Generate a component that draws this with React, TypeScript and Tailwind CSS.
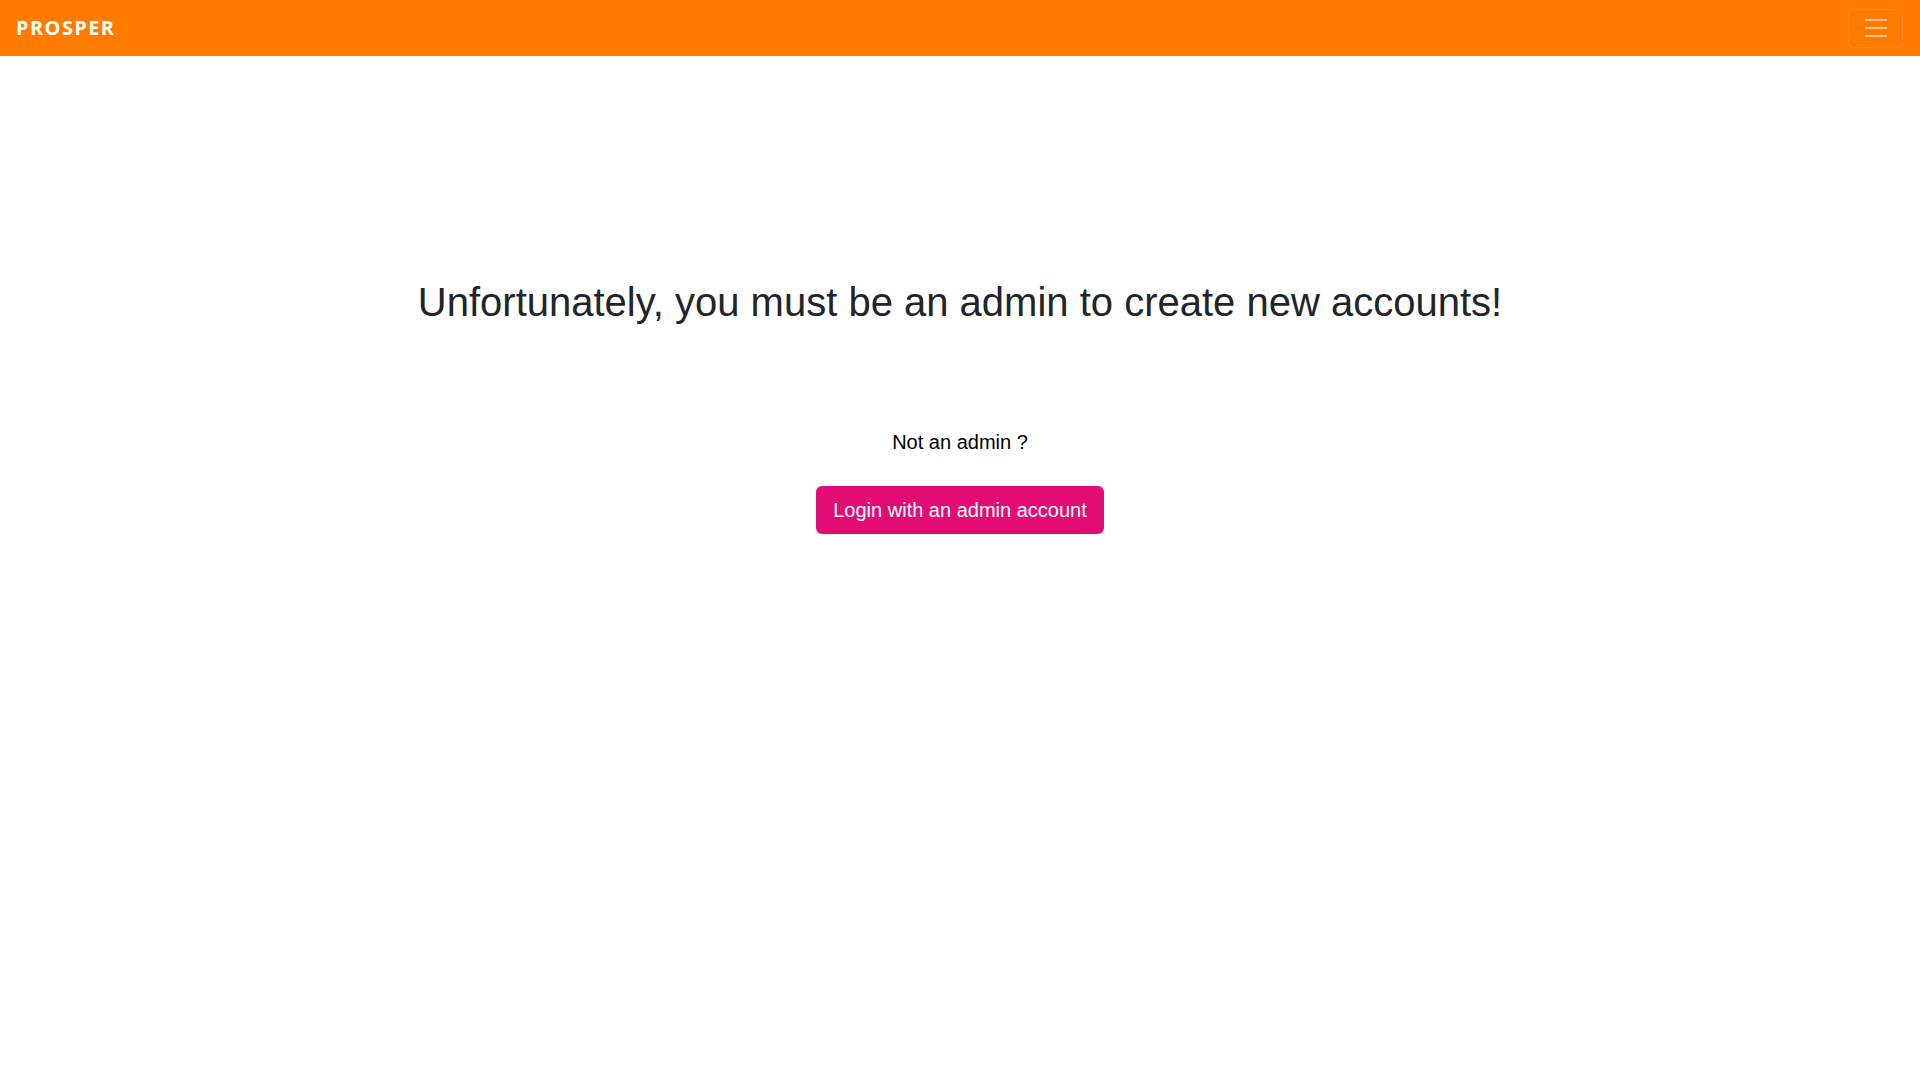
import React from "react";

const App = () => {
  return (
    <div className="min-h-screen bg-white font-['Liberation_Sans',Arial,sans-serif] text-[#212529]">
      {/* Top bar */}
      <nav className="h-[56px] bg-[#ff7b00] flex items-center justify-between pl-4 pr-[17px]">
        <span className="text-white font-bold text-[20px] tracking-[1.4px] font-['Open_Sans',sans-serif]">
          PROSPER
        </span>
        <button
          className="w-[55px] h-[39px] border border-white/10 rounded-[6px] flex items-center justify-center"
          aria-label="Toggle navigation"
        >
          <svg width="30" height="30" viewBox="0 0 30 30">
            <path
              d="M4 7h22M4 15h22M4 23h22"
              stroke="rgba(255,255,255,0.55)"
              strokeWidth="2"
              strokeLinecap="butt"
            />
          </svg>
        </button>
      </nav>

      {/* Message */}
      <main className="flex flex-col items-center pt-[222px]">
        <h1 className="text-[40px] leading-[48px] font-medium">
          Unfortunately, you must be an admin to create new accounts!
        </h1>
        <p className="mt-[101px] text-[20px] leading-[30px] text-black">Not an admin ?</p>
        <button className="mt-[29px] bg-[#e30c74] text-white text-[20px] leading-[30px] px-[17px] py-2 rounded-[6px] h-[48px]">
          Login with an admin account
        </button>
      </main>
    </div>
  );
};

export default App;
